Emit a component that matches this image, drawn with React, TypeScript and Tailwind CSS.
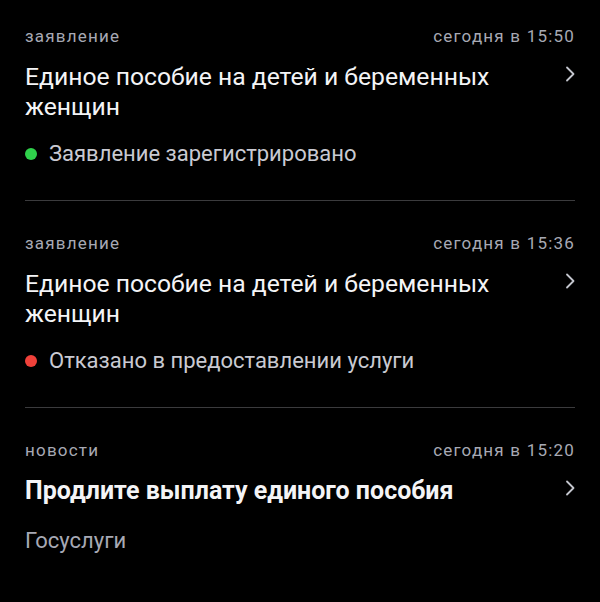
type Item = {
  kind: string
  time: string
  title: string
  bold?: boolean
  status?: { text: string; color: string }
  source?: string
}

const items: Item[] = [
  {
    kind: "заявление",
    time: "сегодня в 15:50",
    title: "Единое пособие на детей и беременных женщин",
    status: { text: "Заявление зарегистрировано", color: "bg-[#2fd14b]" },
  },
  {
    kind: "заявление",
    time: "сегодня в 15:36",
    title: "Единое пособие на детей и беременных женщин",
    status: { text: "Отказано в предоставлении услуги", color: "bg-[#f0413a]" },
  },
  {
    kind: "новости",
    time: "сегодня в 15:20",
    title: "Продлите выплату единого пособия",
    bold: true,
    source: "Госуслуги",
  },
]

const Chevron = () => (
  <svg width="12" height="16" viewBox="0 0 12 16" className="mt-[4px] shrink-0 text-[#c4c6ce]">
    <path d="M4 1.5 10.5 8 4 14.5" fill="none" stroke="currentColor" strokeWidth="1.8" strokeLinecap="round" strokeLinejoin="round" />
  </svg>
)

const Row = ({ item, first, last }: { item: Item; first: boolean; last: boolean }) => (
  <div
    className={`${first ? "pt-[24px]" : "pt-[30px]"} pb-[32px] ${last ? "" : "border-b border-[#3b3b3d]"}`}
  >
    <div className="flex justify-between text-[17px] leading-[24px] tracking-[1.2px] text-[#a7a9b4]">
      <span>{item.kind}</span>
      <span>{item.time}</span>
    </div>
    <div className="mt-[14px] flex justify-between gap-8">
      <p
        className={`${item.bold ? "text-[25px] font-bold" : "text-[24.7px]"} leading-[30px] text-[#f4f4f6]`}
      >
        {item.title}
      </p>
      <Chevron />
    </div>
    {item.status && (
      <div className="mt-[18px] flex items-center gap-[12px] text-[22px] leading-[28px] text-[#c9cad2]">
        <span className={`h-[12px] w-[12px] rounded-full ${item.status.color}`} />
        <span>{item.status.text}</span>
      </div>
    )}
    {item.source && (
      <p className="mt-[21px] text-[22px] leading-[28px] text-[#a7a9b4]">{item.source}</p>
    )}
  </div>
)

export default function App() {
  return (
    <div className="min-h-[602px] w-[600px] bg-black px-[25px] font-['Roboto',sans-serif]">
      {items.map((item, i) => (
        <Row key={i} item={item} first={i === 0} last={i === items.length - 1} />
      ))}
    </div>
  )
}
